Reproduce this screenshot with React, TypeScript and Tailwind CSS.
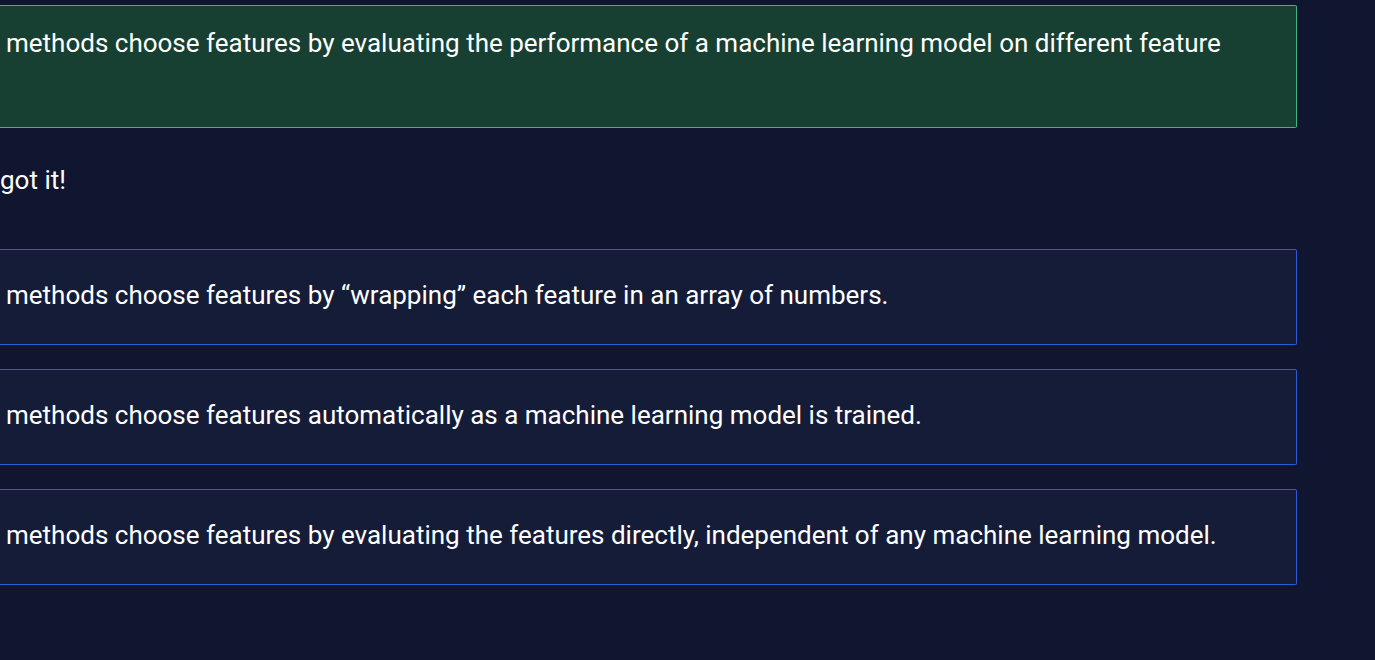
const otherAnswers = [
  "methods choose features by “wrapping” each feature in an array of numbers.",
  "methods choose features automatically as a machine learning model is trained.",
  "methods choose features by evaluating the features directly, independent of any machine learning model.",
];

export default function App() {
  return (
    <main className="min-h-screen overflow-hidden bg-[#10162f] pt-[5px] pr-[78px] font-['Roboto',sans-serif] text-[26px] leading-9 text-white">
      <button
        type="button"
        className="block w-full rounded-r-xs border border-l-0 border-[#3cb483] bg-[#174032] pt-[19px] pb-[66px] pl-1.5 text-left"
      >
        methods choose features by evaluating the performance of a machine learning model on different feature
      </button>
      <p className="py-[34px]">got it!</p>
      <div className="mt-[17px] flex flex-col gap-6">
        {otherAnswers.map((answer) => (
          <button
            key={answer}
            type="button"
            className="min-h-24 w-full rounded-r-xs border border-l-0 border-[#2c5cd3] bg-[#151c38] pb-1 pl-1.5 text-left"
          >
            {answer}
          </button>
        ))}
      </div>
    </main>
  );
}
